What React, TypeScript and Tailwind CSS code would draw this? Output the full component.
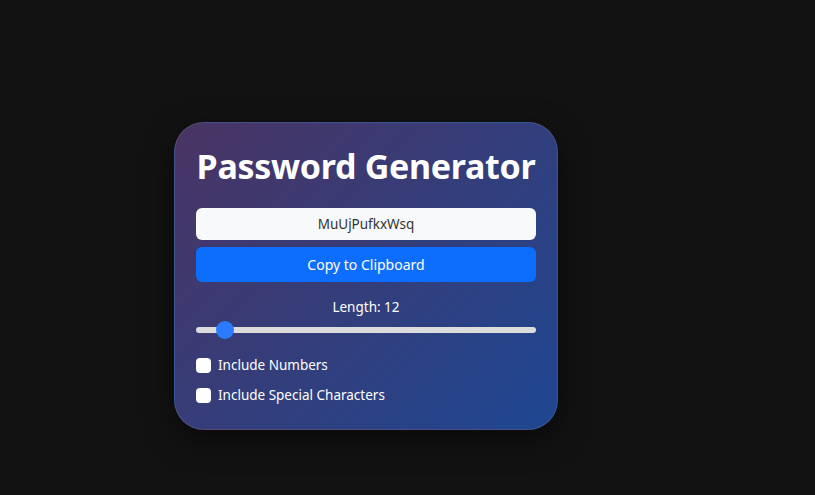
import { useState } from "react";

const App = () => {
  const [length] = useState(12);
  const [numbers, setNumbers] = useState(false);
  const [special, setSpecial] = useState(false);
  const pct = 0.0625;

  return (
    <div
      className="w-full h-[495px] bg-[#121212] flex items-start pl-[174px] pt-[122px]"
      style={{ fontFamily: '"Noto Sans", "Open Sans", sans-serif' }}
    >
      <div className="w-[384px] h-[308px] rounded-[30px] border border-[#ffffff1a] bg-[linear-gradient(135deg,#4a3463,#1e4792)] px-[21px] pt-[20px] shadow-[0_10px_30px_rgba(0,0,0,0.5)] flex flex-col">
        <h1 className="text-white font-bold text-[34px] leading-[46px] text-center whitespace-nowrap tracking-[-0.3px]">
          Password Generator
        </h1>
        <div className="mt-[19px] h-[32px] rounded-[6px] bg-[#f8f9fa] flex items-center justify-center text-[13.5px] text-[#333]">
          MuUjPufkxWsq
        </div>
        <button className="mt-[7px] h-[35px] rounded-[6px] bg-[#0d6efd] text-white text-[14px] flex items-center justify-center">
          Copy to Clipboard
        </button>
        <div className="mt-[15px] text-center text-white text-[13.5px] leading-[20px]">
          Length: {length}
        </div>
        <div className="relative mt-[4px] h-[18px] flex items-center">
          <div className="w-full h-[6px] rounded-full bg-[#dcdcdc]" />
          <div
            className="absolute w-[18px] h-[18px] rounded-full bg-[#2a7bff] -translate-x-1/2"
            style={{ left: `calc(9px + (100% - 18px) * ${pct})` }}
          />
        </div>
        <div className="mt-[18px] flex flex-col gap-[14px]">
          <label className="flex items-center gap-[7px] text-white text-[13.5px] leading-[16px] cursor-pointer">
            <span
              onClick={() => setNumbers(!numbers)}
              className="w-[15px] h-[15px] rounded-[4px] bg-white inline-block"
            />
            Include Numbers
          </label>
          <label className="flex items-center gap-[7px] text-white text-[13.5px] leading-[16px] cursor-pointer">
            <span
              onClick={() => setSpecial(!special)}
              className="w-[15px] h-[15px] rounded-[4px] bg-white inline-block"
            />
            Include Special Characters
          </label>
        </div>
      </div>
    </div>
  );
};

export default App;
